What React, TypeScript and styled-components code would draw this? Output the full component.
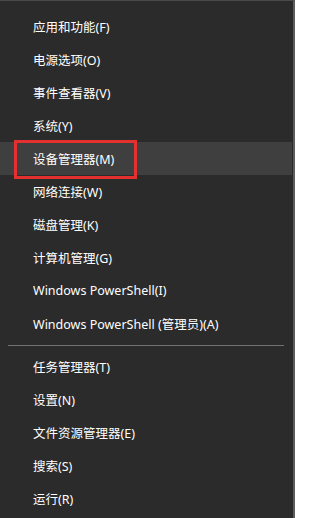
import React from "react";
import styled, { createGlobalStyle } from "styled-components";

const Global = createGlobalStyle`
  html, body { margin: 0; padding: 0; background: #ffffff; }
  body { width: 299px; height: 518px; overflow: hidden; }
`;

const Menu = styled.div`
  width: 295px;
  height: 518px;
  box-sizing: border-box;
  background: #2b2b2b;
  border-top: 1px solid #4a4a4a;
  border-right: 2px solid #5c5c5c;
  padding-top: 9px;
  font-family: "Segoe UI", "Noto Sans", "Noto Sans CJK SC", sans-serif;
  font-size: 12.5px;
  color: #ffffff;
  overflow: hidden;
`;

const Item = styled.div<{ $active?: boolean }>`
  position: relative;
  height: 33px;
  display: flex;
  align-items: center;
  padding-left: 33px;
  margin-right: 1px;
  background: ${(p) => (p.$active ? "#3f3f3f" : "transparent")};
  white-space: nowrap;
`;

const Mark = styled.div`
  position: absolute;
  left: 14px;
  top: -2px;
  width: 123px;
  height: 39px;
  box-sizing: border-box;
  border: 3px solid #e2312f;
`;

const SepWrap = styled.div`
  height: 10px;
  display: flex;
  align-items: center;
  padding: 0 9px 0 8px;
`;

const SepLine = styled.div`
  flex: 1;
  height: 1px;
  background: #727272;
`;

const top = [
  "应用和功能(F)",
  "电源选项(O)",
  "事件查看器(V)",
  "系统(Y)",
  "设备管理器(M)",
  "网络连接(W)",
  "磁盘管理(K)",
  "计算机管理(G)",
  "Windows PowerShell(I)",
  "Windows PowerShell (管理员)(A)",
];

const bottom = ["任务管理器(T)", "设置(N)", "文件资源管理器(E)", "搜索(S)", "运行(R)"];

export default function App() {
  return (
    <>
      <Global />
      <Menu>
        {top.map((t, i) => (
          <Item key={t} $active={i === 4}>
            {i === 4 && <Mark />}
            {t}
          </Item>
        ))}
        <SepWrap>
          <SepLine />
        </SepWrap>
        {bottom.map((t) => (
          <Item key={t}>{t}</Item>
        ))}
      </Menu>
    </>
  );
}
